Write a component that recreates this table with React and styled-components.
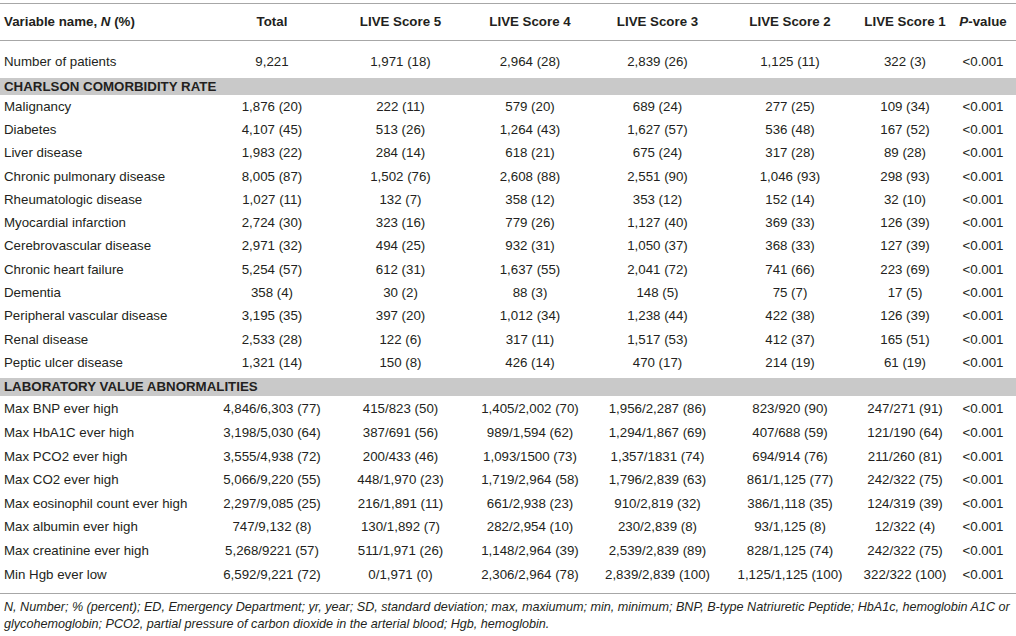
import React from "react";
import styled, { createGlobalStyle } from "styled-components";

const GlobalStyle = createGlobalStyle`
  html, body {
    margin: 0;
    padding: 0;
    background: #fff;
  }
  body {
    font-family: "Liberation Sans", Arial, Helvetica, sans-serif;
    color: #231f20;
  }
`;

const COLS = "208px 128px 129px 130px 125px 140px 90px 66px";

const Wrapper = styled.div`
  width: 1016px;
  padding-top: 3px;
  font-size: 13.3px;
`;

const Table = styled.div`
  border-top: 1px solid #a7a7a7;
  border-bottom: 1px solid #a7a7a7;
  padding-bottom: 7px;
`;

const Row = styled.div`
  display: grid;
  grid-template-columns: ${COLS};
  align-items: center;
  height: ${(p) => p.$h || 23.3}px;
  padding-top: ${(p) => p.$pt || 0}px;
  box-sizing: border-box;
  line-height: 16px;
`;

const HeadRow = styled(Row)`
  font-weight: bold;
  border-bottom: 1px solid #a7a7a7;
`;

const Cell = styled.div`
  text-align: ${(p) => (p.$left ? "left" : "center")};
  padding-left: ${(p) => (p.$left ? "4px" : "0")};
  white-space: nowrap;
`;

const Band = styled.div`
  background: #c9c9c9;
  height: ${(p) => p.$h || 16}px;
  line-height: ${(p) => p.$h || 16}px;
  padding-left: 4px;
  font-weight: bold;
  text-transform: uppercase;
  margin-top: ${(p) => p.$mt || 0}px;
  margin-bottom: ${(p) => p.$mb || 0}px;
`;

const Note = styled.p`
  margin: 5px 0 0;
  padding-left: 4px;
  font-size: 12.6px;
  font-style: italic;
  line-height: 17px;
`;

const charlson = [
  ["Malignancy", "1,876 (20)", "222 (11)", "579 (20)", "689 (24)", "277 (25)", "109 (34)"],
  ["Diabetes", "4,107 (45)", "513 (26)", "1,264 (43)", "1,627 (57)", "536 (48)", "167 (52)"],
  ["Liver disease", "1,983 (22)", "284 (14)", "618 (21)", "675 (24)", "317 (28)", "89 (28)"],
  ["Chronic pulmonary disease", "8,005 (87)", "1,502 (76)", "2,608 (88)", "2,551 (90)", "1,046 (93)", "298 (93)"],
  ["Rheumatologic disease", "1,027 (11)", "132 (7)", "358 (12)", "353 (12)", "152 (14)", "32 (10)"],
  ["Myocardial infarction", "2,724 (30)", "323 (16)", "779 (26)", "1,127 (40)", "369 (33)", "126 (39)"],
  ["Cerebrovascular disease", "2,971 (32)", "494 (25)", "932 (31)", "1,050 (37)", "368 (33)", "127 (39)"],
  ["Chronic heart failure", "5,254 (57)", "612 (31)", "1,637 (55)", "2,041 (72)", "741 (66)", "223 (69)"],
  ["Dementia", "358 (4)", "30 (2)", "88 (3)", "148 (5)", "75 (7)", "17 (5)"],
  ["Peripheral vascular disease", "3,195 (35)", "397 (20)", "1,012 (34)", "1,238 (44)", "422 (38)", "126 (39)"],
  ["Renal disease", "2,533 (28)", "122 (6)", "317 (11)", "1,517 (53)", "412 (37)", "165 (51)"],
  ["Peptic ulcer disease", "1,321 (14)", "150 (8)", "426 (14)", "470 (17)", "214 (19)", "61 (19)"],
];

const labs = [
  ["Max BNP ever high", "4,846/6,303 (77)", "415/823 (50)", "1,405/2,002 (70)", "1,956/2,287 (86)", "823/920 (90)", "247/271 (91)"],
  ["Max HbA1C ever high", "3,198/5,030 (64)", "387/691 (56)", "989/1,594 (62)", "1,294/1,867 (69)", "407/688 (59)", "121/190 (64)"],
  ["Max PCO2 ever high", "3,555/4,938 (72)", "200/433 (46)", "1,093/1500 (73)", "1,357/1831 (74)", "694/914 (76)", "211/260 (81)"],
  ["Max CO2 ever high", "5,066/9,220 (55)", "448/1,970 (23)", "1,719/2,964 (58)", "1,796/2,839 (63)", "861/1,125 (77)", "242/322 (75)"],
  ["Max eosinophil count ever high", "2,297/9,085 (25)", "216/1,891 (11)", "661/2,938 (23)", "910/2,819 (32)", "386/1,118 (35)", "124/319 (39)"],
  ["Max albumin ever high", "747/9,132 (8)", "130/1,892 (7)", "282/2,954 (10)", "230/2,839 (8)", "93/1,125 (8)", "12/322 (4)"],
  ["Max creatinine ever high", "5,268/9221 (57)", "511/1,971 (26)", "1,148/2,964 (39)", "2,539/2,839 (89)", "828/1,125 (74)", "242/322 (75)"],
  ["Min Hgb ever low", "6,592/9,221 (72)", "0/1,971 (0)", "2,306/2,964 (78)", "2,839/2,839 (100)", "1,125/1,125 (100)", "322/322 (100)"],
];

const DataRow = ({ cells, h }) => (
  <Row $h={h}>
    <Cell $left>{cells[0]}</Cell>
    {cells.slice(1).map((c, i) => (
      <Cell key={i}>{c}</Cell>
    ))}
    <Cell>&lt;0.001</Cell>
  </Row>
);

const App = () => {
  return (
    <Wrapper>
      <GlobalStyle />
      <Table>
        <HeadRow $h={37}>
          <Cell $left>
            Variable name, <i>N</i> (%)
          </Cell>
          <Cell>Total</Cell>
          <Cell>LIVE Score 5</Cell>
          <Cell>LIVE Score 4</Cell>
          <Cell>LIVE Score 3</Cell>
          <Cell>LIVE Score 2</Cell>
          <Cell>LIVE Score 1</Cell>
          <Cell>
            <i>P</i>-value
          </Cell>
        </HeadRow>
        <Row $h={37} $pt={5}>
          <Cell $left>Number of patients</Cell>
          <Cell>9,221</Cell>
          <Cell>1,971 (18)</Cell>
          <Cell>2,964 (28)</Cell>
          <Cell>2,839 (26)</Cell>
          <Cell>1,125 (11)</Cell>
          <Cell>322 (3)</Cell>
          <Cell>&lt;0.001</Cell>
        </Row>
        <Band $h={17}>Charlson comorbidity rate</Band>
        {charlson.map((r) => (
          <DataRow key={r[0]} cells={r} />
        ))}
        <Band $h={18} $mt={3} $mb={2}>
          Laboratory value abnormalities
        </Band>
        {labs.map((r) => (
          <DataRow key={r[0]} cells={r} h={23.6} />
        ))}
      </Table>
      <Note>
        N, Number; % (percent); ED, Emergency Department; yr, year; SD, standard deviation; max, maxiumum; min,
        minimum; BNP, B-type Natriuretic Peptide; HbA1c, hemoglobin A1C or
        <br />
        glycohemoglobin; PCO2, partial pressure of carbon dioxide in the arterial blood; Hgb, hemoglobin.
      </Note>
    </Wrapper>
  );
};

export default App;
